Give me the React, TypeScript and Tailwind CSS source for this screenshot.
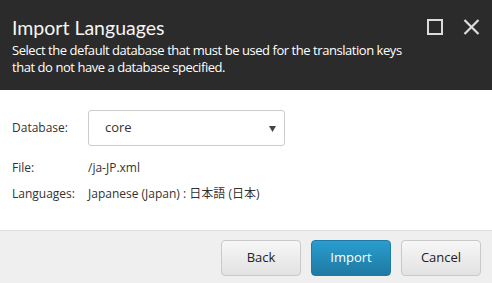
import React from "react";

export default function App() {
  return (
    <div
      className="w-[492px] h-[283px] flex flex-col bg-white overflow-hidden"
      style={{ fontFamily: '"Open Sans", "Noto Sans CJK JP", sans-serif' }}
    >
      <div className="h-[90px] bg-[#2b2b2b] pl-[12px] pr-[12px] pt-[14px]">
        <div className="flex items-start">
          <div
            className="flex-1 text-[19.5px] leading-[27px] text-[#f5f5f5]"
            style={{ fontFamily: 'Lato, "Open Sans", sans-serif' }}
          >
            Import Languages
          </div>
          <div className="flex gap-[20px] pt-[5px]">
            <svg width="16" height="16" viewBox="0 0 16 16">
              <rect x="1" y="1" width="14" height="14" fill="none" stroke="#dcdcdc" strokeWidth="2" />
            </svg>
            <svg width="17" height="16" viewBox="0 0 17 16">
              <path d="M1.5 1 L15.5 15 M15.5 1 L1.5 15" stroke="#dcdcdc" strokeWidth="2.2" />
            </svg>
          </div>
        </div>
        <div className="text-[13px] leading-[17px] tracking-[-0.45px] text-white mt-[1px] whitespace-nowrap">
          Select the default database that must be used for the translation keys
          <br />
          that do not have a database specified.
        </div>
      </div>
      <div className="flex-1 pl-[12px] pt-[20px] text-[12px] text-[#333]">
        <div className="flex items-center">
          <div className="w-[76px]">Database:</div>
          <div className="relative w-[197px] h-[36px] border border-[#ccc] rounded-[3px] flex items-center pl-[16px] text-[13px]">
            core
            <svg className="absolute right-[8px] top-[15px]" width="7" height="6" viewBox="0 0 7 6">
              <path d="M0 0 L7 0 L3.5 6 Z" fill="#444" />
            </svg>
          </div>
        </div>
        <div className="flex mt-[13px] leading-[18px]">
          <div className="w-[76px]">File:</div>
          <div>/ja-JP.xml</div>
        </div>
        <div className="flex mt-[8px] leading-[18px]">
          <div className="w-[76px]">Languages:</div>
          <div>Japanese (Japan) : 日本語 (日本)</div>
        </div>
      </div>
      <div className="h-[53px] bg-[#efefef] border-t border-[#ddd] flex justify-end items-start pt-[9px] pr-[11px] gap-[10px] text-[13px]">
        <button className="w-[80px] h-[36px] rounded-[4px] border border-[#c9c9c9] bg-gradient-to-b from-[#f7f7f7] to-[#e2e2e2] text-[#222]">
          Back
        </button>
        <button className="w-[80px] h-[36px] rounded-[4px] border border-[#1f7ba3] bg-gradient-to-b from-[#2a9dcf] to-[#1e7aa2] text-white">
          Import
        </button>
        <button className="w-[80px] h-[36px] rounded-[4px] border border-[#c9c9c9] bg-gradient-to-b from-[#f7f7f7] to-[#e2e2e2] text-[#222]">
          Cancel
        </button>
      </div>
    </div>
  );
}
